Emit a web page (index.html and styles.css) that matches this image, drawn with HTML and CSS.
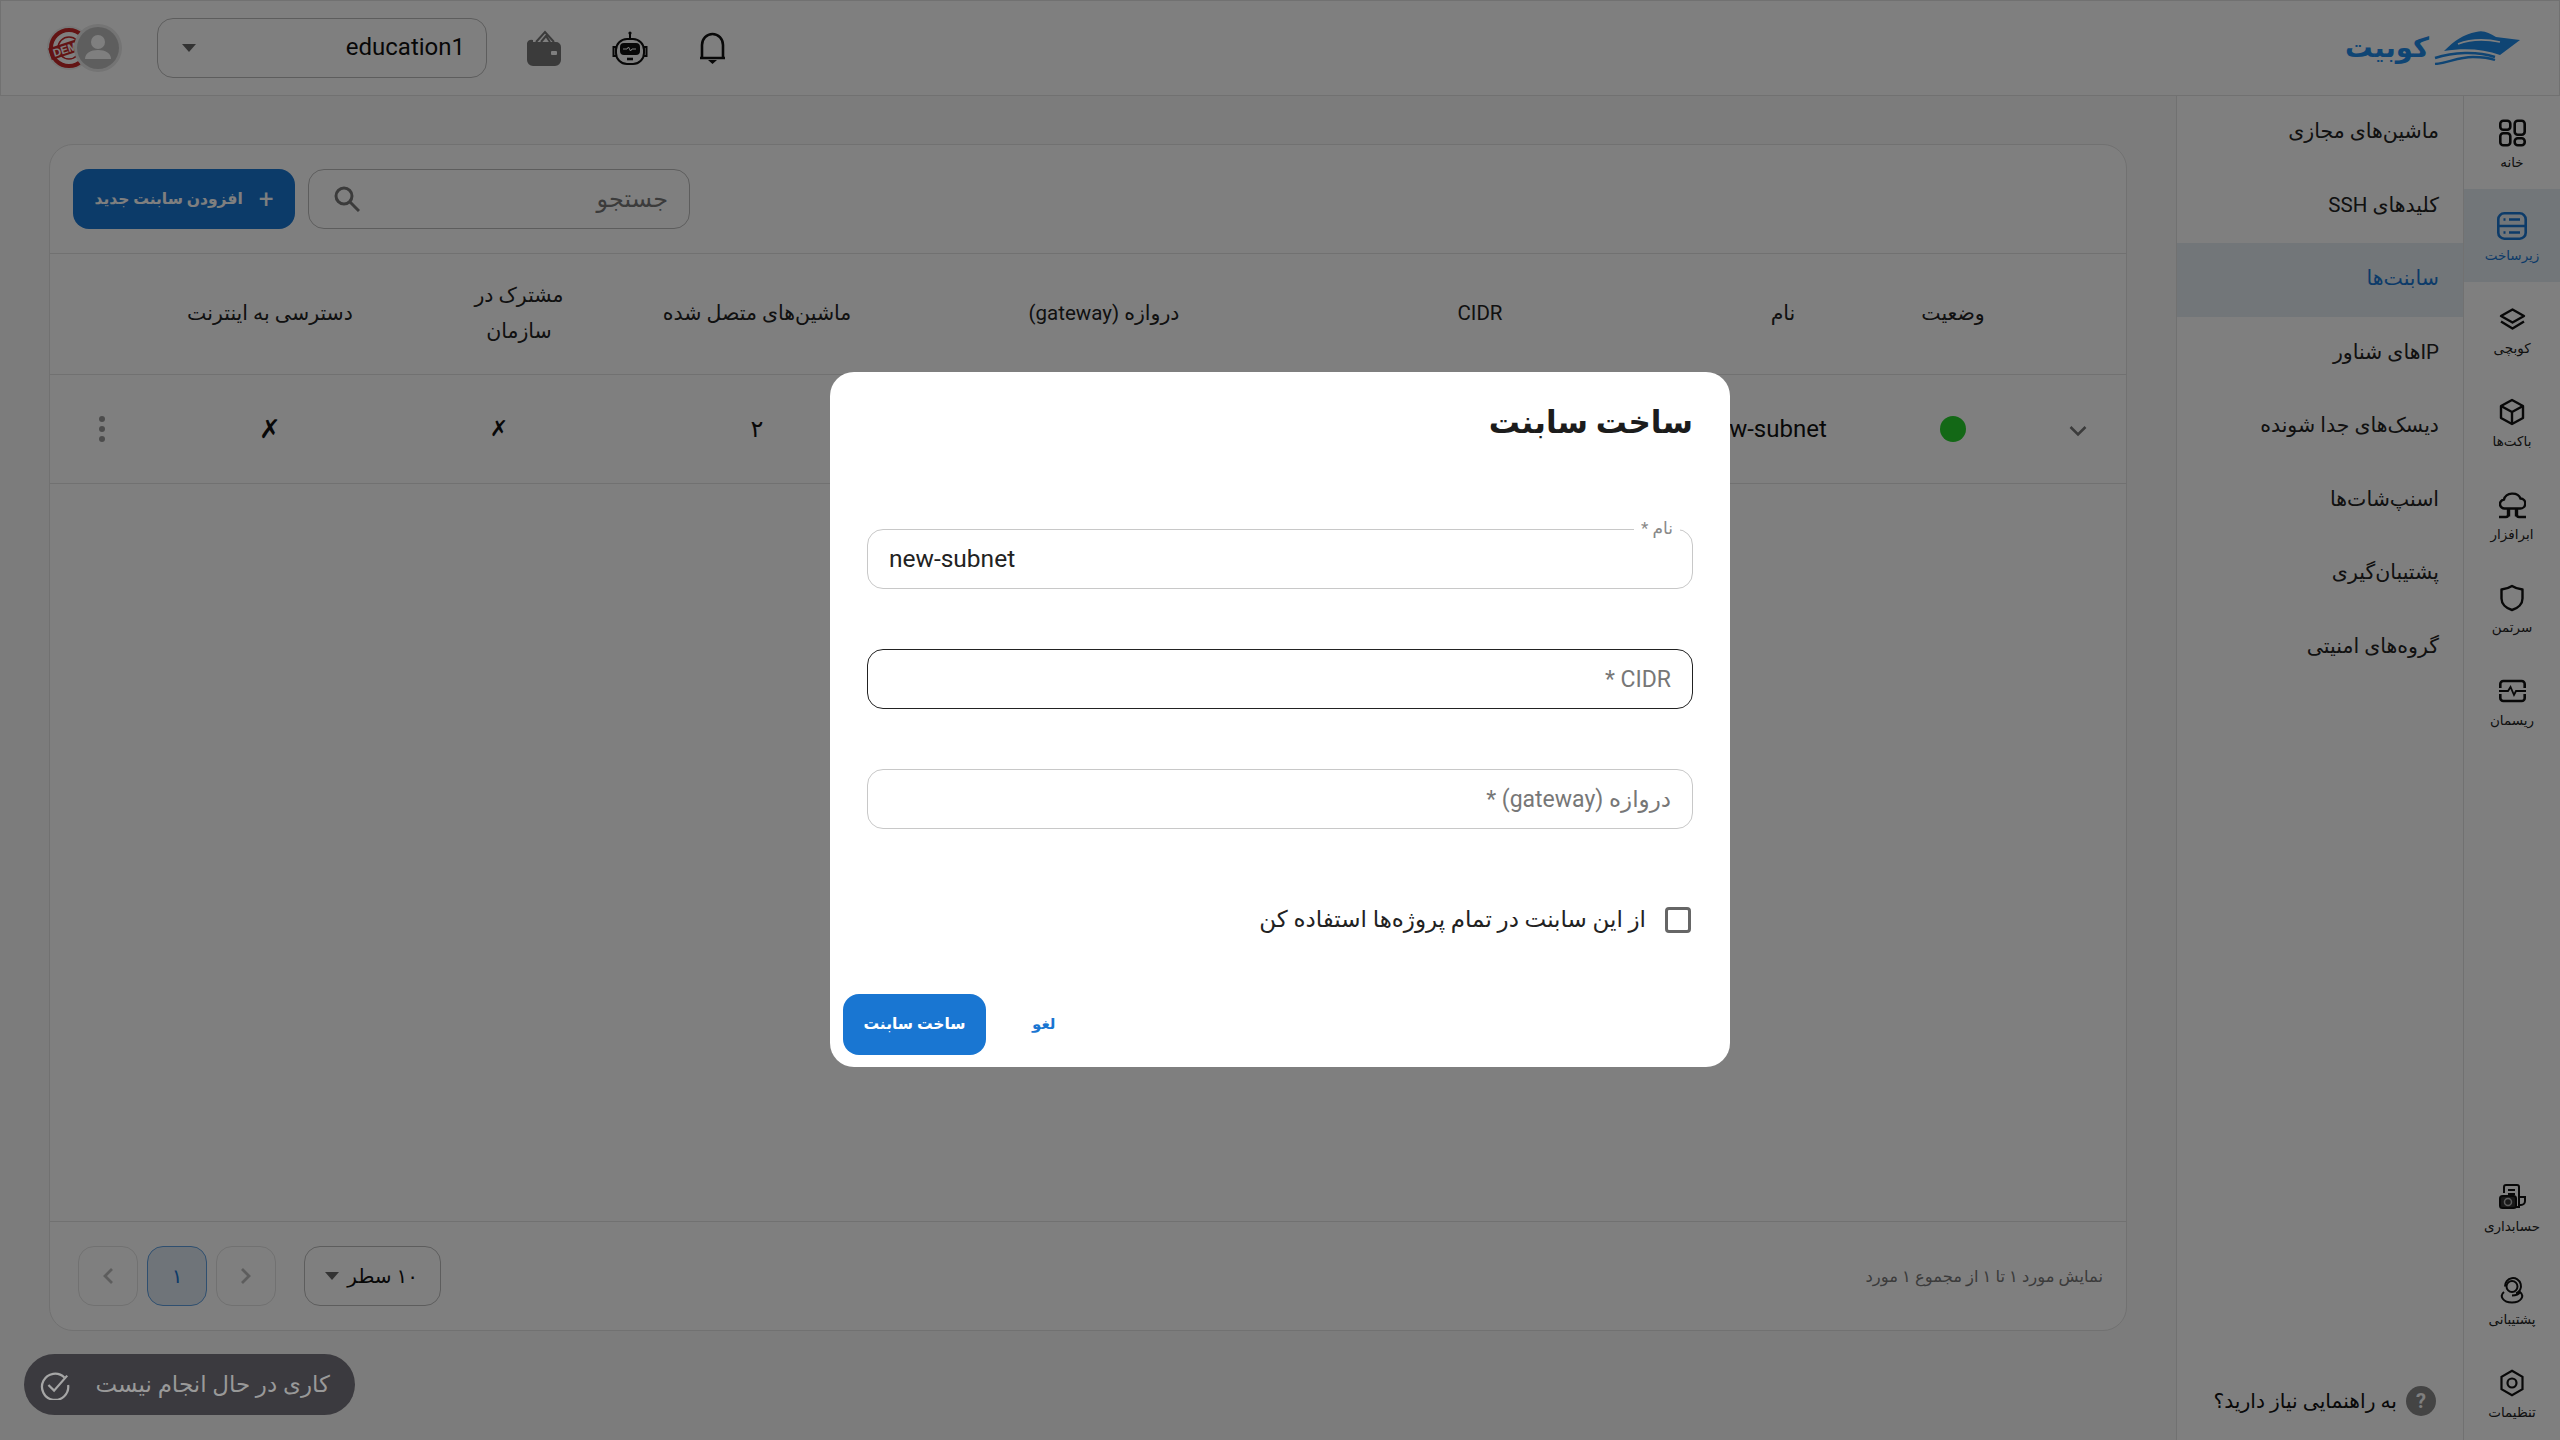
FILE: index.html
```html
<!doctype html>
<html lang="fa" dir="rtl">
<head>
<meta charset="utf-8">
<title>ساخت سابنت</title>
<link rel="stylesheet" href="styles.css">
</head>
<body>
<div class="app">
	<header class="topbar">
		<div class="logo">
			<svg class="logo-boat" viewBox="0 0 86 34" width="86" height="34">
				<path fill="#1f8ae8" d="M10 20C20 10 30 3 42 1c8-2 13 1 20 5l24 3-20 15C50 18 30 17 10 20z"/>
				<path fill="none" stroke="#fff" stroke-width="1.6" d="M24 13c13-5 28-5 42-2"/>
				<path fill="none" stroke="#1f8ae8" stroke-width="2.4" d="M1 27c18-6 42-7 60-1M1 33c14-1 22-7 38-7 8 0 14 0 22 3"/>
			</svg>
			<span class="logo-text">کوبیت</span>
		</div>
		<div class="topbar-tools">
			<svg class="tool-bell" viewBox="0 0 27 32" width="27" height="32" fill="none" stroke="#111" stroke-width="2.6"><path d="M3 26V13a10.500 11 0 0 1 21 0v13zM1 26h25"/><path fill="#111" stroke="none" d="M9 28h9l-4.500 4z"/></svg>
			<svg class="tool-robot" viewBox="0 0 36 34" width="36" height="34" fill="none" stroke="#111" stroke-width="2"><circle cx="18" cy="2" r="1.600" fill="#111" stroke="none"/><path d="M18 3v5"/><rect x="4" y="8" width="28" height="25" rx="11"/><path d="M4 16H1.500v9H4M32 16h2.500v9H32"/><rect x="9" y="13" width="18" height="10" rx="3" fill="#111"/><path stroke="#fff" stroke-width="1" d="M11 18h4l1.500-2 2 4 1.500-2h4"/><path stroke-width="2.600" d="M15 28h6"/></svg>
			<svg class="tool-wallet" viewBox="0 0 34 36" width="34" height="36"><path fill="none" stroke="#777" stroke-width="2" d="M9 12l9-10 9 10M14 12l5-6 4 6"/><path fill="#777" d="M6 10a5 5 0 0 0-6 3v17a6 6 0 0 0 6 6h22a6 6 0 0 0 6-6V17a5 5 0 0 0-5-5H6z"/><rect x="24" y="21" width="6" height="4" rx="1" fill="#fff"/></svg>
			<div class="project-select">
				<span class="project-name">education1</span>
				<span class="caret"></span>
			</div>
			<div class="avatars">
				<svg class="avatar-user" viewBox="0 0 48 48" width="48" height="48">
					<circle cx="24" cy="24" r="24" fill="#e8e8e8"/>
					<circle cx="24" cy="24" r="21" fill="#bdbdbd"/>
					<circle cx="24" cy="18" r="7" fill="#fff"/>
					<path fill="#fff" d="M11 35c0-6 6-9 13-9s13 3 13 9z"/>
				</svg>
				<svg class="avatar-demo" viewBox="0 0 44 44" width="44" height="44">
					<circle cx="22" cy="22" r="22" fill="#eee"/>
					<circle cx="22" cy="22" r="18" fill="#fff" stroke="#c62828" stroke-width="4"/>
					<circle cx="22" cy="22" r="11" fill="none" stroke="#c62828" stroke-width="1.500"/>
					<rect x="2" y="16" width="40" height="12" fill="#c62828" transform="rotate(-18 22 22)"/>
					<text x="22" y="26" class="demo-text" transform="rotate(-18 22 22)">DEMO</text>
				</svg>
			</div>
		</div>
	</header>

	<div class="workspace">
		<nav class="rail">
			<div class="rail-group">
				<a class="rail-item">
					<svg viewBox="0 0 27 27" width="27" height="27" fill="none" stroke="#111" stroke-width="2.600"><rect x="1.300" y="1.300" width="10" height="9" rx="3"/><rect x="15.700" y="1.300" width="10" height="14" rx="3"/><rect x="1.300" y="13.700" width="10" height="12" rx="3"/><rect x="15.700" y="18.700" width="10" height="7" rx="3"/></svg>
					<span>خانه</span>
				</a>
				<a class="rail-item is-active">
					<svg viewBox="0 0 30 28" width="30" height="28" fill="none" stroke="#1976d2" stroke-width="2.600"><rect x="1.300" y="1.300" width="27.400" height="25.400" rx="6"/><path d="M1.300 14h27.400M6.500 7.500h2M6.500 20.500h2M12 7.500h11M12 20.500h11"/></svg>
					<span>زیرساخت</span>
				</a>
				<a class="rail-item">
					<svg viewBox="0 0 27 22" width="27" height="22" fill="none" stroke="#111" stroke-width="2.400" stroke-linejoin="round"><path d="M13.500 1.500L25 8l-11.500 6.500L2 8z"/><path d="M2 13.500l11.500 7 11.500-7"/></svg>
					<span>کوبچی</span>
				</a>
				<a class="rail-item">
					<svg viewBox="0 0 26 27" width="26" height="27" fill="none" stroke="#111" stroke-width="2.400" stroke-linejoin="round"><path d="M13 1.500l11 6v12l-11 6-11-6v-12z"/><path d="M2 7.500l11 6 11-6M13 13.500v12"/></svg>
					<span>باکت‌ها</span>
				</a>
				<a class="rail-item">
					<svg viewBox="0 0 27 27" width="27" height="27" fill="none" stroke="#111" stroke-width="2.400"><path d="M7 17H6a4.500 4.500 0 0 1-1-9 8.500 7 0 0 1 16.500-1A5 5 0 0 1 21 17H7z"/><path d="M10 17v8M17 17v8M0 25.500h7a2 2 0 0 0 2-2V17M27 25.500h-7a2 2 0 0 1-2-2V17"/></svg>
					<span>ابرافزار</span>
				</a>
				<a class="rail-item">
					<svg viewBox="0 0 24 27" width="24" height="27" fill="none" stroke="#111" stroke-width="2.400" stroke-linejoin="round"><path d="M12 1.500c3 2 6 3 10.500 3.500v9c0 5-4 9.500-10.500 11.500C5.500 23.500 1.500 19 1.500 14V5C6 4.500 9 3.500 12 1.500z"/></svg>
					<span>سرتمن</span>
				</a>
				<a class="rail-item">
					<svg viewBox="0 0 27 22" width="27" height="22" fill="none" stroke="#111" stroke-width="2.600"><path d="M1.300 8V4a3 3 0 0 1 3-3h18.400a3 3 0 0 1 3 3v4M1.300 14v4a3 3 0 0 0 3 3h18.400a3 3 0 0 0 3-3v-4"/><path stroke-width="1.800" d="M0 11h9l2.500-4 3.500 8 2-4h10"/></svg>
					<span>ریسمان</span>
				</a>
			</div>
			<div class="rail-group">
				<a class="rail-item">
					<svg viewBox="0 0 27 26" width="27" height="26" fill="none" stroke="#111" stroke-width="2"><path d="M5 9V3a2 2 0 0 1 2-2h11a2 2 0 0 1 2 2v20h-3M9 6h7M9 10h7"/><path d="M20 13h6v4a4 4 0 0 1-4 4h-2"/><rect x="1" y="12" width="16" height="12" rx="2.500" fill="#333"/><circle cx="9" cy="18" r="3.500" stroke="#bbb" stroke-width="1.500"/></svg>
					<span>حسابداری</span>
				</a>
				<a class="rail-item">
					<svg viewBox="0 0 24 27" width="24" height="27" fill="none" stroke="#111" stroke-width="2"><path d="M5 10a8 8 0 1 1 11 7"/><circle cx="12" cy="10" r="5.500"/><path d="M4 15.500c-5 4-1 10.500 8 10.500s13-6.500 8-10.500c-1 2-4 3.500-8 3.500"/></svg>
					<span>پشتیبانی</span>
				</a>
				<a class="rail-item">
					<svg viewBox="0 0 24 27" width="24" height="27" fill="none" stroke="#111" stroke-width="2.200"><path d="M12 1.300l10.500 6v12.400L12 25.700 1.500 19.700V7.300z"/><circle cx="12" cy="13.500" r="4.500"/></svg>
					<span>تنظیمات</span>
				</a>
			</div>
		</nav>

		<aside class="submenu">
			<ul class="submenu-list">
				<li>ماشین‌های مجازی</li>
				<li>کلیدهای SSH</li>
				<li class="is-active">سابنت‌ها</li>
				<li>IPهای شناور</li>
				<li>دیسک‌های جدا شونده</li>
				<li>اسنپ‌شات‌ها</li>
				<li>پشتیبان‌گیری</li>
				<li>گروه‌های امنیتی</li>
			</ul>
			<div class="help-link">
				<span class="help-icon">?</span>
				<span>به راهنمایی نیاز دارید؟</span>
			</div>
		</aside>

		<main class="content">
			<section class="card">
				<div class="toolbar">
					<div class="search">
						<span class="search-text">جستجو</span>
						<svg viewBox="0 0 26 26" width="26" height="26" fill="none" stroke="#777" stroke-width="3"><circle cx="10" cy="10" r="8"/><path d="M16 16l9 9"/></svg>
					</div>
					<button class="add-button"><span class="add-plus">+</span><span>افزودن سابنت جدید</span></button>
				</div>

				<div class="table-row table-head">
					<div></div>
					<div>وضعیت</div>
					<div>نام</div>
					<div>CIDR</div>
					<div>دروازه (gateway)</div>
					<div>ماشین‌های متصل شده</div>
					<div class="cell-shared">مشترک در سازمان</div>
					<div class="cell-internet">دسترسی به اینترنت</div>
					<div></div>
				</div>
				<div class="table-row table-body">
					<div><svg viewBox="0 0 18 12" width="18" height="12" fill="none" stroke="#777" stroke-width="2.600"><path d="M1.500 2L9 9.500 16.500 2"/></svg></div>
					<div><span class="status-dot"></span></div>
					<div class="cell-name">new-subnet</div>
					<div></div>
					<div></div>
					<div>۲</div>
					<div class="cell-cross">✗</div>
					<div class="cell-internet cell-cross-big">✗</div>
					<div><span class="kebab"><i></i><i></i><i></i></span></div>
				</div>

				<div class="card-spacer"></div>

				<div class="card-footer">
					<span class="range-text">نمایش مورد ۱ تا ۱ از مجموع ۱ مورد</span>
					<div class="pager">
						<div class="rows-select"><span>۱۰ سطر</span><span class="caret"></span></div>
						<div class="page-button"><svg viewBox="0 0 12 18" width="12" height="18" fill="none" stroke="#bbb" stroke-width="2.800"><path d="M2 2l7 7-7 7"/></svg></div>
						<div class="page-button is-current">۱</div>
						<div class="page-button"><svg viewBox="0 0 12 18" width="12" height="18" fill="none" stroke="#bbb" stroke-width="2.800"><path d="M10 2L3 9l7 7"/></svg></div>
					</div>
				</div>
			</section>
		</main>
	</div>
</div>

<div class="backdrop">
	<div class="dialog">
		<h2 class="dialog-title">ساخت سابنت</h2>
		<div class="dialog-fields">
			<div class="field">
				<span class="field-legend">نام *</span>
				<span class="field-value">new-subnet</span>
			</div>
			<div class="field is-hover"><span class="field-label">CIDR *</span></div>
			<div class="field"><span class="field-label">دروازه (gateway) *</span></div>
		</div>
		<div class="check-row">
			<span class="check-box"></span>
			<span>از این سابنت در تمام پروژه‌ها استفاده کن</span>
		</div>
		<div class="dialog-actions">
			<button class="cancel-button">لغو</button>
			<button class="submit-button">ساخت سابنت</button>
		</div>
	</div>
</div>

<div class="task-toast">
	<span>کاری در حال انجام نیست</span>
	<svg viewBox="0 0 32 32" width="30" height="30" fill="none" stroke="#a6a6a6" stroke-width="2.400"><path d="M26 8a14 14 0 1 0 4 8"/><path d="M9 16l6 6L29 6"/></svg>
</div>
</body>
</html>
```

FILE: styles.css
```css
* {
	box-sizing: border-box;
}

html, body {
	margin: 0;
	height: 100%;
}

body {
	font-family: Roboto, "DejaVu Sans", sans-serif;
	color: #111;
	background-color: #f8f8f8;
	overflow: hidden;
}

button {
	font-family: inherit;
	border: 0;
	cursor: pointer;
}

.app {
	display: flex;
	flex-direction: column;
	height: 1440px;
}

/* top bar */
.topbar {
	display: flex;
	align-items: center;
	justify-content: space-between;
	height: 96px;
	padding: 0 39px 0 46px;
	background-color: #fff;
	border: 1px solid #e2e2e2;
}

.logo {
	display: flex;
	align-items: center;
	gap: 5px;
}

.logo-text {
	padding-bottom: 2px;
	font-size: 27.500px;
	font-weight: bold;
	color: #1f8ae8;
}

.topbar-tools {
	display: flex;
	align-items: center;
	gap: 51px;
}

.project-select {
	display: flex;
	align-items: center;
	justify-content: space-between;
	width: 330px;
	height: 60px;
	margin-right: -11px;
	padding: 0 21px 0 24px;
	font-size: 24px;
	border: 1px solid #bbb;
	border-radius: 16px;
}

.project-name {
	margin-bottom: 2px;
}

.caret {
	width: 0;
	height: 0;
	border-style: solid;
	border-width: 8px 7px 0;
	border-color: #666 transparent transparent;
}

.avatars {
	display: flex;
	align-items: center;
	margin-right: -16px;
}

.avatar-user {
	position: relative;
	z-index: 1;
}

.avatar-demo {
	margin-right: -17px;
}

.demo-text {
	font-family: "Liberation Sans", sans-serif;
	font-size: 11px;
	font-weight: bold;
	fill: #fff;
	text-anchor: middle;
}

/* side navigation */
.workspace {
	display: flex;
	flex: 1;
	min-height: 0;
}

.rail {
	display: flex;
	flex-direction: column;
	justify-content: space-between;
	width: 97px;
	padding-bottom: 1px;
	background-color: #fff;
	border-left: 1px solid #e2e2e2;
}

.rail-item {
	display: flex;
	flex-direction: column;
	align-items: center;
	height: 93px;
	padding-top: 23px;
	font-size: 13.500px;
	color: #222;
}

.rail-item svg {
	height: 28px;
}

.rail-item span {
	margin-top: 7px;
}

.rail-item.is-active {
	color: #1976d2;
	background-color: #e4ecf2;
}

.submenu {
	display: flex;
	flex-direction: column;
	justify-content: space-between;
	width: 287px;
	background-color: #fff;
	border-left: 1px solid #e2e2e2;
}

.submenu-list {
	margin: 0;
	padding: 0;
	list-style: none;
}

.submenu-list li {
	display: flex;
	align-items: center;
	height: 73.500px;
	padding: 0 24px 3px 0;
	font-size: 20.500px;
	color: #222;
}

.submenu-list li.is-active {
	color: #1976d2;
	background-color: #e4ecf2;
}

.help-link {
	display: flex;
	align-items: center;
	gap: 9px;
	height: 30px;
	margin-bottom: 24px;
	padding-right: 27px;
	font-size: 20.300px;
}

.help-icon {
	width: 30px;
	height: 30px;
	font-size: 20px;
	font-weight: bold;
	line-height: 30px;
	text-align: center;
	color: #fff;
	background-color: #888;
	border-radius: 50%;
}

/* table card */
.content {
	flex: 1;
	min-width: 0;
	padding: 48px 49px 109px 49px;
}

.card {
	display: flex;
	flex-direction: column;
	height: 100%;
	background-color: #fff;
	border: 1px solid #e2e2e2;
	border-radius: 24px;
}

.toolbar {
	display: flex;
	align-items: center;
	justify-content: flex-end;
	gap: 13px;
	height: 109px;
	padding-left: 23px;
	border-bottom: 1px solid #e2e2e2;
}

.search {
	display: flex;
	align-items: center;
	justify-content: space-between;
	width: 382px;
	height: 60px;
	padding: 0 21px 0 25px;
	font-size: 24px;
	color: #777;
	border: 1px solid #bbb;
	border-radius: 16px;
}

.add-button {
	display: flex;
	align-items: center;
	justify-content: center;
	gap: 16px;
	width: 222px;
	height: 60px;
	padding-bottom: 1px;
	font-size: 15.500px;
	font-weight: bold;
	color: #fff;
	background-color: #1976d2;
	border-radius: 16px;
}

.add-plus {
	font-size: 26px;
	font-weight: normal;
}

.table-row {
	display: grid;
	grid-template-columns: 96px 154px 186px 420px 332px 362px 114px 309px 1fr;
	align-items: center;
	justify-items: center;
	text-align: center;
	border-bottom: 1px solid #e2e2e2;
}

.table-head {
	height: 121px;
	padding-bottom: 2px;
	font-size: 20.500px;
	line-height: 36px;
	color: #222;
}

.table-body {
	height: 109px;
	padding-bottom: 1px;
	font-size: 24px;
}

.cell-shared {
	padding: 0 12px;
}

.cell-internet {
	padding-right: 75px;
}

.cell-name {
	padding-right: 36px;
}

.cell-cross {
	padding-right: 40px;
	font-size: 22px;
}

.cell-cross-big {
	font-size: 26px;
}

.status-dot {
	display: block;
	width: 26px;
	height: 26px;
	background-color: #26d02c;
	border-radius: 50%;
}

.kebab {
	display: flex;
	flex-direction: column;
	gap: 4px;
}

.kebab i {
	width: 6px;
	height: 6px;
	background-color: #999;
	border-radius: 50%;
}

.card-spacer {
	flex: 1;
}

.card-footer {
	display: flex;
	align-items: center;
	justify-content: space-between;
	height: 109px;
	padding: 0 23px 0 28px;
	border-top: 1px solid #e2e2e2;
}

.range-text {
	font-size: 16.400px;
	color: #777;
}

.pager {
	display: flex;
	align-items: center;
	gap: 9px;
}

.rows-select {
	display: flex;
	align-items: center;
	justify-content: space-between;
	width: 137px;
	height: 60px;
	margin-left: 19px;
	padding: 0 22px 0 20px;
	font-size: 20px;
	border: 1px solid #bbb;
	border-radius: 16px;
}

.page-button {
	display: flex;
	align-items: center;
	justify-content: center;
	width: 60px;
	height: 60px;
	border: 1px solid #e2e2e2;
	border-radius: 16px;
}

.page-button.is-current {
	font-size: 20px;
	color: #1976d2;
	background-color: #dfe8f2;
	border-color: #5e9fe0;
}

/* dialog */
.backdrop {
	position: fixed;
	top: 0;
	right: 0;
	bottom: 0;
	left: 0;
	z-index: 10;
	display: flex;
	align-items: center;
	justify-content: center;
	padding-bottom: 1px;
	background-color: rgba(0, 0, 0, 0.5);
}

.dialog {
	display: flex;
	flex-direction: column;
	width: 900px;
	height: 695px;
	padding: 30px 37px 12px;
	background-color: #fff;
	border-radius: 24px;
}

.dialog-title {
	margin: 0;
	height: 42px;
	font-size: 31px;
	font-weight: bold;
	line-height: 42px;
	color: #1c1c1c;
}

.dialog-fields {
	display: flex;
	flex-direction: column;
	gap: 60px;
	margin-top: 85px;
}

.field {
	position: relative;
	display: flex;
	align-items: center;
	height: 60px;
	padding: 0 21px;
	font-size: 23px;
	color: #777;
	border: 1px solid #c8c8c8;
	border-radius: 16px;
}

.field.is-hover {
	border-color: #222;
}

.field-value {
	width: 100%;
	margin-bottom: 2px;
	direction: ltr;
	text-align: left;
	font-size: 24.500px;
	color: #222;
}

.field-legend {
	position: absolute;
	top: -13px;
	right: 12px;
	padding: 0 7px;
	font-size: 17px;
	line-height: 22px;
	color: #888;
	background-color: #fff;
}

.check-row {
	display: flex;
	align-items: center;
	gap: 19px;
	margin-top: 77px;
	padding-right: 2px;
	font-size: 23px;
	color: #222;
}

.check-box {
	width: 26px;
	height: 26px;
	border: 3px solid #666;
	border-radius: 4px;
}

.dialog-actions {
	display: flex;
	align-items: center;
	justify-content: flex-end;
	gap: 24px;
	margin-top: auto;
	margin-left: -24px;
}

.cancel-button {
	padding: 0 22px 2px;
	font-size: 15px;
	font-weight: bold;
	color: #1976d2;
	background-color: transparent;
}

.submit-button {
	width: 143px;
	height: 61px;
	padding-bottom: 3px;
	font-size: 15.500px;
	font-weight: bold;
	color: #fff;
	background-color: #1976d2;
	border-radius: 16px;
}

/* task pill, stays above the backdrop */
.task-toast {
	position: fixed;
	left: 24px;
	bottom: 25px;
	z-index: 20;
	display: flex;
	align-items: center;
	justify-content: space-between;
	width: 331px;
	height: 61px;
	padding: 0 25px 0 16px;
	font-size: 23px;
	color: #999;
	background-color: #3b3a3f;
	border-radius: 31px;
}
```
